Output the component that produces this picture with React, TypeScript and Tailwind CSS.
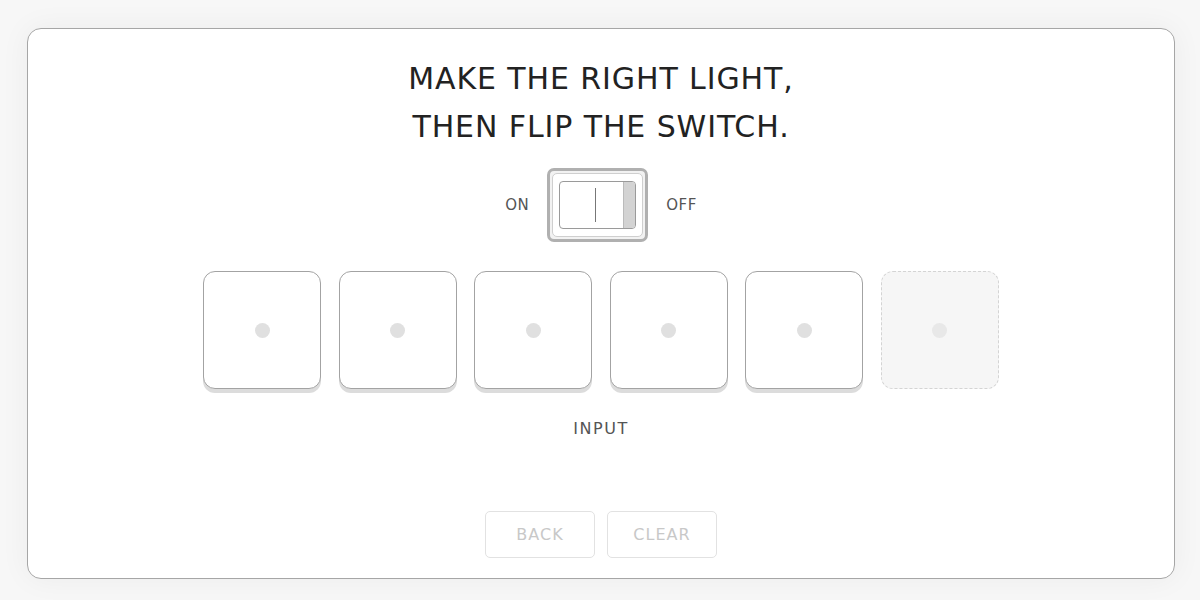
import React from "react";

function Tile({ empty }: { empty?: boolean }) {
  if (empty) {
    return (
      <div className="flex h-[118px] w-[118px] items-center justify-center rounded-[12px] border border-dashed border-[#d4d4d4] bg-[#f6f6f6]">
        <div className="h-[15px] w-[15px] rounded-full bg-[#e8e8e8]" />
      </div>
    );
  }
  return (
    <div className="flex h-[118px] w-[118px] items-center justify-center rounded-[12px] border border-[#a3a3a3] bg-white shadow-[0_4px_0_#dcdcdc]">
      <div className="h-[15px] w-[15px] rounded-full bg-[#e0e0e0]" />
    </div>
  );
}

export default function App() {
  return (
    <div className="h-[600px] w-[1200px] bg-[#f7f7f7] pt-[28px] pl-[27px] font-['DejaVu_Sans',sans-serif]">
      <div className="flex h-[551px] w-[1148px] flex-col items-center rounded-[14px] border border-[#a6a6a6] bg-white shadow-[0_0_30px_rgba(0,0,0,0.05)]">
        <h1 className="mt-[26px] text-center text-[30px] leading-[48px] tracking-[0.9px] text-[#222]">
          MAKE THE RIGHT LIGHT,
          <br />
          THEN FLIP THE SWITCH.
        </h1>

        <div className="mt-[17px] flex items-center gap-[18px] text-[15px] tracking-[0.5px] text-[#555]">
          <span>ON</span>
          <div className="flex h-[74px] w-[101px] items-center justify-center rounded-[7px] border-[3px] border-[#b0b0b0] bg-[#f2f2f2] p-[2px]">
            <div className="flex h-full w-full items-center justify-center rounded-[5px] border border-[#cfcfcf] bg-white">
              <div className="flex h-[48px] w-[77px] overflow-hidden rounded-[4px] border border-[#9a9a9a] bg-white">
                <div className="flex flex-1 items-center justify-center pl-[8px]">
                  <div className="h-[34px] w-px bg-[#777]" />
                </div>
                <div className="w-[12px] border-l border-[#bbb] bg-[#d3d3d3]" />
              </div>
            </div>
          </div>
          <span>OFF</span>
        </div>

        <div className="mt-[29px] flex gap-[17.5px]">
          <Tile />
          <Tile />
          <Tile />
          <Tile />
          <Tile />
          <Tile empty />
        </div>

        <div className="mt-[28px] text-[16px] tracking-[1.5px] text-[#555]">INPUT</div>

        <div className="mt-auto mb-[20px] flex gap-[12px]">
          <button className="h-[47px] w-[110px] rounded-[5px] border border-[#e2e2e2] bg-white text-[16px] tracking-[1px] text-[#c8c8c8]">
            BACK
          </button>
          <button className="h-[47px] w-[110px] rounded-[5px] border border-[#e2e2e2] bg-white text-[16px] tracking-[1px] text-[#c8c8c8]">
            CLEAR
          </button>
        </div>
      </div>
    </div>
  );
}
